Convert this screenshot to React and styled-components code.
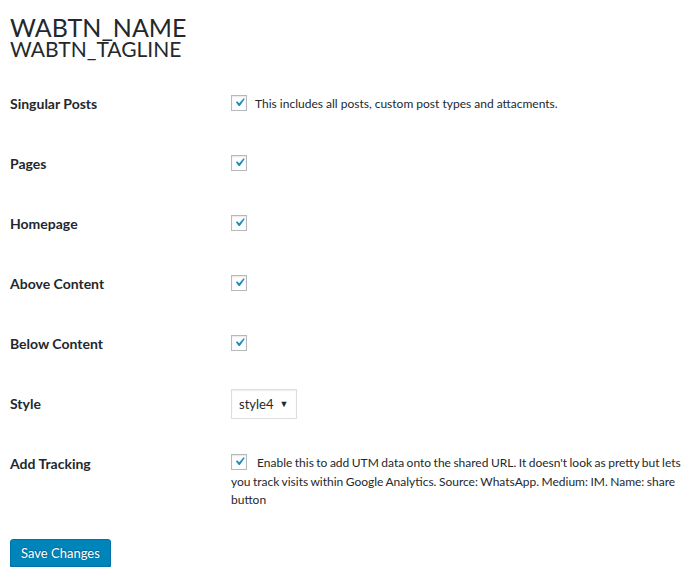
import React from "react";
import styled, { createGlobalStyle } from "styled-components";

const GlobalStyle = createGlobalStyle`
  html, body {
    margin: 0;
    padding: 0;
    background: #fff;
  }
  body {
    font-family: Lato, "Open Sans", sans-serif;
    font-size: 13px;
    color: #23282d;
  }
`;

const Wrap = styled.div`
  padding: 15px 4px 0 10px;
`;

const Title = styled.h1`
  margin: 0;
  font-size: 25px;
  line-height: 24px;
  font-weight: 400;
  color: #23282d;
`;

const Tagline = styled.div`
  font-size: 21px;
  line-height: 20px;
  font-weight: 400;
`;

const Table = styled.div`
  margin-top: 15px;
  display: flex;
  flex-direction: column;
`;

const Row = styled.div`
  display: flex;
  align-items: ${(p) => (p.top ? "flex-start" : "center")};
  min-height: 60px;
  padding-top: ${(p) => (p.top ? "20px" : "0")};
  box-sizing: border-box;
`;

const Label = styled.div`
  width: 221px;
  flex-shrink: 0;
  font-size: 14px;
  font-weight: 700;
  line-height: 20px;
`;

const Field = styled.label`
  flex: 1;
  font-size: 12px;
  line-height: 18.5px;
  word-spacing: ${(p) => (p.tight ? "-0.6px" : "0")};
`;

const Box = styled.span`
  display: inline-block;
  vertical-align: middle;
  width: 14px;
  height: 14px;
  border: 1px solid #b4b9be;
  background: #fff;
  box-shadow: inset 0 1px 2px rgba(0, 0, 0, 0.1);
  margin: -3px ${(p) => (p.gap ? p.gap : 8)}px 0 0;
  position: relative;
`;

const Tick = styled.svg`
  position: absolute;
  left: -1px;
  top: -2px;
`;

const Check = ({ gap }) => (
  <Box gap={gap}>
    <Tick width="17" height="17" viewBox="0 0 20 20">
      <path
        d="M14.83 4.89l1.34.94-5.81 8.38H9.02L5.78 9.67l1.34-1.25 2.57 2.4z"
        fill="#1e8cbe"
      />
    </Tick>
  </Box>
);

const Select = styled.div`
  display: inline-flex;
  align-items: center;
  height: 28px;
  padding: 0 8px 0 7px;
  border: 1px solid #ddd;
  box-shadow: inset 0 1px 2px rgba(0, 0, 0, 0.07);
  font-size: 13px;
  gap: 6px;
`;

const Arrow = styled.span`
  font-size: 9px;
`;

const Button = styled.button`
  margin-top: 29px;
  height: 28px;
  padding: 0 10px;
  background: #0085ba;
  border: 1px solid #0073aa;
  border-radius: 3px;
  box-shadow: 0 1px 0 #006799;
  color: #fff;
  font-family: Lato, "Open Sans", sans-serif;
  font-size: 13px;
  text-shadow: 0 -1px 1px #006799, 1px 0 1px #006799;
  cursor: pointer;
`;

const rows = [
  { label: "Singular Posts", text: "This includes all posts, custom post types and attacments." },
  { label: "Pages" },
  { label: "Homepage" },
  { label: "Above Content" },
  { label: "Below Content" },
];

const App = () => (
  <Wrap>
    <GlobalStyle />
    <Title>WABTN_NAME</Title>
    <Tagline>WABTN_TAGLINE</Tagline>
    <Table>
      {rows.map((r) => (
        <Row key={r.label}>
          <Label>{r.label}</Label>
          <Field>
            <Check />
            {r.text}
          </Field>
        </Row>
      ))}
      <Row>
        <Label>Style</Label>
        <Field>
          <Select>
            style4 <Arrow>▼</Arrow>
          </Select>
        </Field>
      </Row>
      <Row top>
        <Label>Add Tracking</Label>
        <Field tight>
          <Check gap={10} />
          Enable this to add UTM data onto the shared URL. It doesn't look as
          pretty but lets you track visits within Google Analytics. Source:
          WhatsApp. Medium: IM. Name: share button
        </Field>
      </Row>
    </Table>
    <Button>Save Changes</Button>
  </Wrap>
);

export default App;
